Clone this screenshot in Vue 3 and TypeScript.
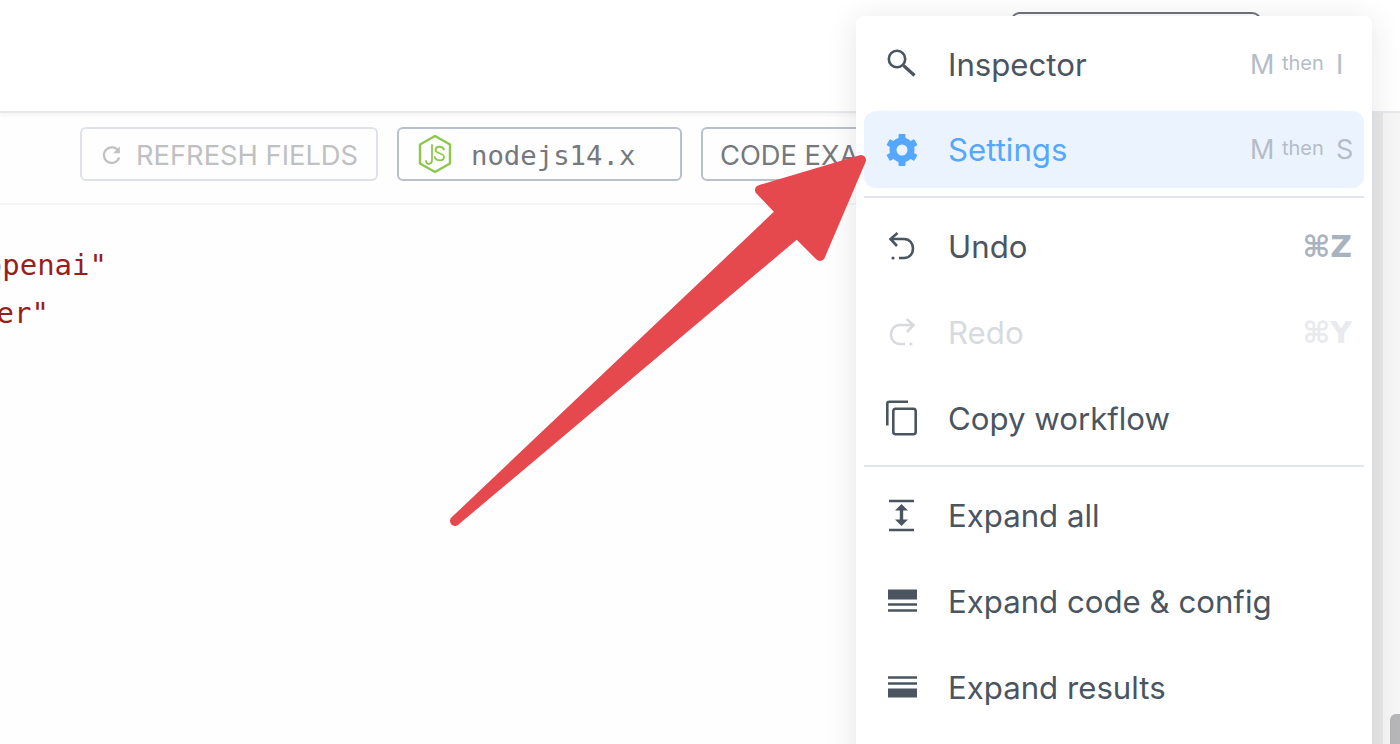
<script setup lang="ts">
interface Item {
  label: string
  icon: string
  active?: boolean
  disabled?: boolean
  shortcut?: string
  cmd?: string
  dividerAfter?: boolean
}
const items: Item[] = [
  { label: 'Inspector', icon: 'search', shortcut: 'I' },
  { label: 'Settings', icon: 'gear', shortcut: 'S', active: true, dividerAfter: true },
  { label: 'Undo', icon: 'undo', cmd: 'Z' },
  { label: 'Redo', icon: 'redo', cmd: 'Y', disabled: true },
  { label: 'Copy workflow', icon: 'copy', dividerAfter: true },
  { label: 'Expand all', icon: 'expand' },
  { label: 'Expand code & config', icon: 'code' },
  { label: 'Expand results', icon: 'results' },
]
const gearTeeth = [0, 60, 120, 180, 240, 300]
</script>

<template>
  <div class="page">
    <header class="topbar">
      <div class="top-button"></div>
    </header>
    <div class="toolbar">
      <button class="btn btn-muted">
        <svg class="refresh" viewBox="0 0 20 20" width="24" height="24" fill="none" stroke="currentColor" stroke-width="1.800">
          <path d="M15.500 7A6.500 6.500 0 1 0 16 12" />
          <path d="M16.500 3v5.500h-5.500" fill="currentColor" stroke="none" />
        </svg>
        REFRESH FIELDS
      </button>
      <button class="btn btn-node">
        <svg class="node-logo" viewBox="0 0 36 40" width="36" height="40" fill="none" stroke="#8cc84b" stroke-width="2.400" stroke-linejoin="round" stroke-linecap="round">
          <path d="M18 2 33 10.500V29.500L18 38 3 29.500V10.500Z" />
          <path d="M15 11V26C15 31 9 31 9 27" stroke-width="1.800" />
          <path d="M27 15.500C25 11.500 18.500 12 18.500 16C18.500 20 27 18.500 27 23C27 27.500 19 27.500 17.800 23" stroke-width="1.800" />
        </svg>
        <span class="runtime">nodejs14.x</span>
      </button>
      <button class="btn btn-code">CODE EXAMPLES</button>
    </div>
    <div class="code">
      <div class="line line-long"><span>"openai"</span></div>
      <div class="line line-short"><span>"user"</span></div>
    </div>

    <aside class="rail"><span class="thumb"></span></aside>

    <svg class="arrow" viewBox="0 0 1400 744" width="1400" height="744">
      <path d="M861 160 760 190 781 212 455 521 797 233 820 256Z" fill="#e5484d" stroke="#e5484d" stroke-width="10" stroke-linejoin="round" />
    </svg>

    <nav class="menu">
      <template v-for="item in items" :key="item.label">
        <div class="item" :class="{ active: item.active, disabled: item.disabled }">
          <svg class="icon" viewBox="0 0 32 32" width="32" height="32" fill="none" stroke="currentColor" stroke-width="2.600">
            <template v-if="item.icon === 'search'">
              <circle cx="11" cy="10" r="8.200" />
              <path d="M17.500 16.500 28.500 26.500" stroke-width="3.200" />
            </template>
            <template v-else-if="item.icon === 'gear'">
              <circle cx="16" cy="16" r="9" stroke-width="7" />
              <rect
                v-for="angle in gearTeeth"
                :key="angle"
                x="12.500"
                y="0"
                width="7"
                height="6"
                rx="1"
                fill="currentColor"
                stroke="none"
                :transform="`rotate(${angle} 16 16)`"
              />
            </template>
            <template v-else-if="item.icon === 'undo'">
              <path d="M11.500 2 4.500 8 11 15M5 8H18C30 8 30 27 18 27H13" />
              <circle cx="7" cy="27" r="1.600" fill="currentColor" stroke="none" />
            </template>
            <template v-else-if="item.icon === 'redo'">
              <path d="M20.500 2 27.500 8 21 15M27 8H14C2 8 2 27 14 27H19" />
              <circle cx="25" cy="27" r="1.600" fill="currentColor" stroke="none" />
            </template>
            <template v-else-if="item.icon === 'copy'">
              <path d="M22 -1.300H3.300A2 2 0 0 0 1.300 .7V22.500" />
              <rect x="7.300" y="5.800" width="22.400" height="25.400" rx="2.500" />
            </template>
            <template v-else-if="item.icon === 'expand'">
              <path d="M3 1H28M3 30H28" />
              <path d="M15.500 4 22 10.500H17.200V19.500H22L15.500 26 9 19.500H13.800V10.500H9Z" fill="currentColor" stroke="none" />
            </template>
            <template v-else-if="item.icon === 'code'">
              <path d="M2 3.500H31V13.500H2Z" fill="currentColor" stroke="none" />
              <path d="M2 18.500H31M2 24.500H31" />
            </template>
            <template v-else>
              <path d="M2 5.500H31M2 11.500H31" />
              <path d="M2 16.500H31V25.500H2Z" fill="currentColor" stroke="none" />
            </template>
          </svg>
          <span class="label">{{ item.label }}</span>
          <span v-if="item.shortcut" class="shortcut">
            <span class="key key-m">M</span><span class="then">then</span><span class="key">{{ item.shortcut }}</span>
          </span>
          <span v-if="item.cmd" class="cmd">⌘{{ item.cmd }}</span>
        </div>
        <hr v-if="item.dividerAfter" class="divider" />
      </template>
    </nav>
  </div>
</template>

<style scoped>
.page {
  position: relative;
  width: 1400px;
  height: 744px;
  overflow: hidden;
  background: #fefefe;
  font-family: Inter, "Liberation Sans", sans-serif;
}
.topbar {
  height: 111px;
  background: #fff;
  border-bottom: 2px solid #e6e8ec;
  box-shadow: 0 2px 4px rgba(30, 40, 60, 0.05);
  display: flex;
  justify-content: flex-end;
  padding-right: 138px;
}
.top-button {
  width: 252px;
  height: 60px;
  margin-top: 12px;
  box-sizing: border-box;
  border: 2px solid #6f7378;
  border-radius: 10px;
}
.toolbar {
  height: 92px;
  box-sizing: border-box;
  padding: 14px 0 0 80px;
  display: flex;
  align-items: flex-start;
  gap: 19px;
  border-bottom: 2px solid #f3f4f5;
}
.btn {
  height: 54px;
  box-sizing: border-box;
  background: #fefefe;
  border: 2px solid #bac0cb;
  border-radius: 6px;
  display: flex;
  align-items: center;
  font-family: inherit;
  font-size: 27.300px;
  color: #75787c;
  padding: 2px 0 0;
  flex: none;
}
.btn-muted {
  width: 298px;
  border-color: #dfe3e8;
  color: #bfc0c2;
  padding-left: 18px;
  gap: 12px;
}
.btn-node {
  width: 285px;
  padding-left: 18px;
  gap: 18px;
}
.node-logo {
  margin-top: -2px;
}
.runtime {
  font-family: "DejaVu Sans Mono", monospace;
  font-size: 27.300px;
  color: #75787c;
}
.btn-code {
  padding-left: 17px;
  padding-right: 17px;
  white-space: nowrap;
}
.code {
  margin-top: 36px;
  font-family: "DejaVu Sans Mono", monospace;
  font-size: 29px;
  line-height: 48px;
  color: #9b1c1c;
}
.line {
  display: flex;
  justify-content: flex-end;
  white-space: pre;
}
.line-long {
  width: 107px;
}
.line-short {
  width: 49px;
}
.rail {
  position: absolute;
  top: 113px;
  right: 0;
  bottom: 0;
  width: 17px;
  box-sizing: content-box;
  background: #f6f6f6;
  border-left: 11px solid #e8e8e8;
}
.thumb {
  position: absolute;
  right: 0;
  bottom: 0;
  width: 10px;
  height: 30px;
  border-radius: 6px 0 0 0;
  background: #b6b6b8;
}
.arrow {
  position: absolute;
  left: 0;
  top: 0;
  z-index: 2;
  pointer-events: none;
}
.menu {
  position: absolute;
  left: 856px;
  top: 16px;
  width: 516px;
  height: 760px;
  box-sizing: border-box;
  padding: 10px 8px 0;
  background: #fff;
  border-radius: 8px;
  box-shadow: 0 4px 30px rgba(30, 40, 60, 0.12);
  z-index: 1;
}
.item {
  height: 77px;
  margin-bottom: 9px;
  display: flex;
  align-items: center;
  padding: 0 8px 0 22px;
  border-radius: 12px;
  color: #4a5560;
  font-size: 31.200px;
}
.item:first-child,
.item:has(+ .divider) {
  margin-bottom: 8px;
}
.icon {
  flex: none;
  margin-right: 30px;
  overflow: visible;
}
.label {
  flex: 1;
  white-space: nowrap;
}
.active {
  background: #ebf4fe;
  color: #56a7ff;
}
.disabled {
  color: #d8dbde;
}
.divider {
  height: 2px;
  margin: 0 0 10px;
  border: 0;
  background: #e2e6ea;
}
.shortcut {
  display: flex;
  align-items: center;
  color: #b4bcc8;
}
.key {
  font-size: 27px;
  width: 20px;
}
.key-m {
  width: 32px;
}
.then {
  font-size: 20px;
  width: 54px;
  margin-bottom: 4px;
}
.cmd {
  font-family: "DejaVu Sans", sans-serif;
  font-weight: 700;
  font-size: 30px;
  line-height: 1;
  margin-right: 4px;
  color: #a9b3bf;
}
.disabled .cmd {
  color: #e8eaed;
}
</style>
